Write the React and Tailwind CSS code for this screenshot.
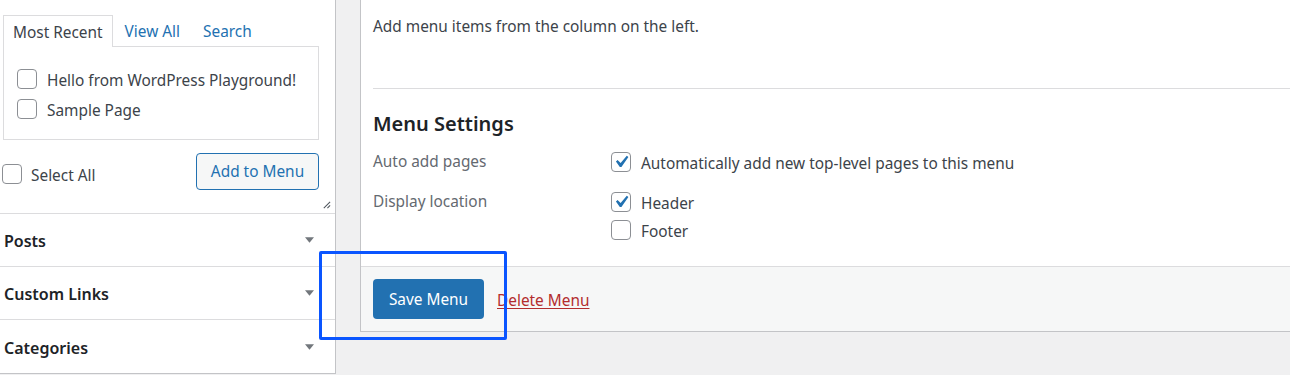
import React from 'react';

const Check = () => (
    <svg viewBox="0 0 20 20" className="w-[24px] h-[24px] -m-[3px] shrink-0" aria-hidden="true">
        <path d="M14.83 4.89l1.34.94-5.81 8.38H9.02L5.78 9.67l1.34-1.25 2.57 2.4z" fill="#2271b1" />
    </svg>
);

const Checkbox = ({ checked }) => (
    <span className="w-[20px] h-[20px] shrink-0 rounded-[4px] border border-[#8c8f94] bg-white flex items-center justify-center">
        {checked && <Check />}
    </span>
);

const Item = ({ label, checked }) => (
    <label className="flex items-center gap-[10px] h-[28px]">
        <Checkbox checked={checked} />
        <span className="pt-[3px]">{label}</span>
    </label>
);

const Caret = () => (
    <svg viewBox="0 0 10 6" className="w-[9px] h-[6px]" aria-hidden="true">
        <path d="M0 0h10L5 6z" fill="#72777c" />
    </svg>
);

const Section = ({ title, last }) => (
    <div className={last ? "h-[53px] flex items-center justify-between pl-[4px] pr-[21px]" : "h-[53px] border-b border-[#dcdcde] flex items-center justify-between pl-[4px] pr-[21px]"}>
        <h3 className="text-[16px] font-semibold text-[#1d2327] pt-[2px]">{title}</h3>
        <Caret />
    </div>
);

const App = () => {
    return (
        <div className="min-h-screen h-[375px] overflow-hidden bg-[#f0f0f1] flex items-start font-['Noto_Sans',sans-serif] text-[15.4px] text-[#3c434a]">
            {/* Left column: add menu items */}
            <div className="w-[336px] shrink-0 bg-white border-r border-b border-[#c3c4c7]">
                <div className="relative h-[214px] border-b border-[#dcdcde] pr-[16px]">
                    {/* Tabs */}
                    <div className="pt-[15px] pl-[3px] flex items-end">
                        <div className="relative z-10 -mb-px h-[32px] px-[9px] pt-[2px] flex items-center bg-white border border-b-0 border-[#dcdcde] text-[#3c434a]">
                            Most Recent
                        </div>
                        <a className="ml-[12px] h-[31px] pt-[2px] flex items-center text-[#2271b1]">View All</a>
                        <a className="ml-[23px] h-[31px] pt-[2px] flex items-center text-[#2271b1]">Search</a>
                    </div>
                    <div className="ml-[3px] h-[94px] border border-[#dcdcde] pt-[17px] pl-[13px]">
                        <label className="flex items-center gap-[10px] h-[30px]">
                            <Checkbox />
                            <span className="pt-[3px]">Hello from WordPress Playground!</span>
                        </label>
                        <label className="flex items-center gap-[10px] h-[30px]">
                            <Checkbox />
                            <span className="pt-[3px]">Sample Page</span>
                        </label>
                    </div>
                    {/* Select all + add */}
                    <div className="mt-[13px] flex items-center justify-between">
                        <label className="flex items-center gap-[9px] pl-[2px] pt-[5px]">
                            <Checkbox />
                            <span className="pt-[3px]">Select All</span>
                        </label>
                        <button className="h-[37px] w-[123px] pt-[1px] rounded-[4px] border border-[#2271b1] bg-[#f6f7f7] text-[#2271b1]">
                            Add to Menu
                        </button>
                    </div>
                    <svg viewBox="0 0 10 10" className="absolute right-[4px] bottom-[4px] w-[9px] h-[9px]" aria-hidden="true">
                        <path d="M9 2L2 9M9 6L6 9" stroke="#50575e" strokeWidth="1.2" />
                    </svg>
                </div>
                <Section title="Posts" />
                <Section title="Custom Links" />
                <Section title="Categories" last />
            </div>

            {/* Right column: menu structure */}
            <div className="relative flex-1 ml-[24px] bg-white border-l border-b border-[#c3c4c7]">
                <div className="pl-[12px]">
                    <div className="h-[89px] border-b border-[#dcdcde] pt-[15px] leading-[24px]">
                        Add menu items from the column on the left.
                    </div>
                    <div className="pt-[20px] pb-[22px]">
                        <h3 className="text-[20px] leading-[28px] font-semibold text-[#1d2327] pt-[1px]">Menu Settings</h3>
                        <div className="mt-[10px] flex flex-col gap-[12px]">
                            <div className="flex">
                                <div className="w-[238px] leading-[28px] text-[#646970]">Auto add pages</div>
                                <div>
                                    <Item checked label="Automatically add new top-level pages to this menu" />
                                </div>
                            </div>
                            <div className="flex">
                                <div className="w-[238px] leading-[28px] text-[#646970]">Display location</div>
                                <div>
                                    <Item checked label="Header" />
                                    <Item label="Footer" />
                                </div>
                            </div>
                        </div>
                    </div>
                </div>
                <div className="h-[65px] border-t border-[#dcdcde] bg-[#f6f7f7] pl-[12px] flex items-center gap-[13px]">
                    <button className="h-[40px] w-[111px] pt-[2px] rounded-[4px] bg-[#2271b1] text-white">
                        Save Menu
                    </button>
                    <a className="pt-[3px] text-[#b32d2e] underline underline-offset-2">Delete Menu</a>
                </div>
            </div>

            {/* Highlight box */}
            <div className="absolute left-[319px] top-[251px] w-[188px] h-[89px] border-[3px] border-[#0a55ff] rounded-[2px] pointer-events-none" />
        </div>
    );
};

export default App;
